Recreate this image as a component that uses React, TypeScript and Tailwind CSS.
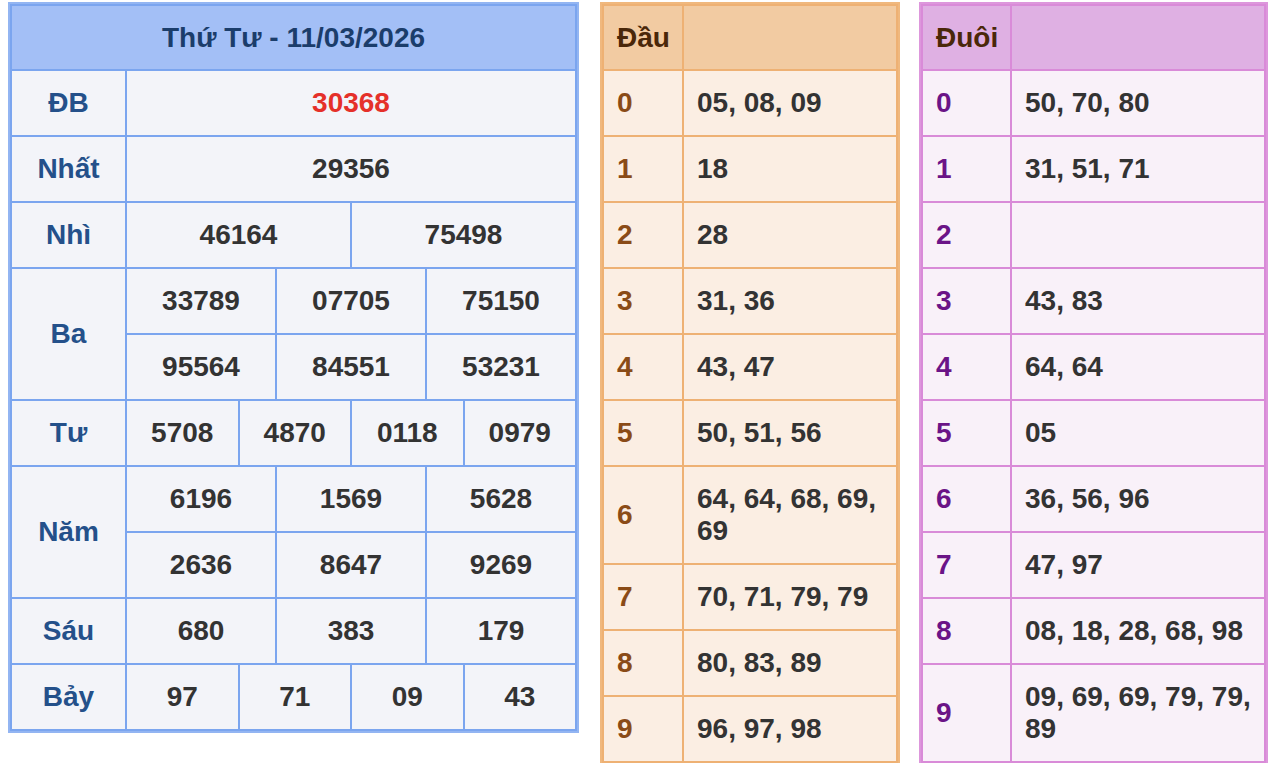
import React from 'react'

const font = { fontFamily: '"Liberation Sans", Arial, sans-serif' }

const blueCell = 'border-2 border-[#7ba5ef] bg-[#f3f4f9] py-4 leading-[32px] text-center text-[#333333]'
const blueLabel = 'border-2 border-[#7ba5ef] bg-[#f3f4f9] py-4 leading-[32px] text-center text-[#24508a]'

type Prize = { label: string; rows: string[][]; red?: boolean }

const prizes: Prize[] = [
    { label: 'ĐB', rows: [['30368']], red: true },
    { label: 'Nhất', rows: [['29356']] },
    { label: 'Nhì', rows: [['46164', '75498']] },
    { label: 'Ba', rows: [['33789', '07705', '75150'], ['95564', '84551', '53231']] },
    { label: 'Tư', rows: [['5708', '4870', '0118', '0979']] },
    { label: 'Năm', rows: [['6196', '1569', '5628'], ['2636', '8647', '9269']] },
    { label: 'Sáu', rows: [['680', '383', '179']] },
    { label: 'Bảy', rows: [['97', '71', '09', '43']] },
]

const dau = ['05, 08, 09', '18', '28', '31, 36', '43, 47', '50, 51, 56', '64, 64, 68, 69, 69', '70, 71, 79, 79', '80, 83, 89', '96, 97, 98']
const duoi = ['50, 70, 80', '31, 51, 71', '', '43, 83', '64, 64', '05', '36, 56, 96', '47, 97', '08, 18, 28, 68, 98', '09, 69, 69, 79, 79, 89']

function ResultTable() {
    return (
        <div className='w-[571px] shrink-0 border-2 border-[#93b5f2]'>
            <table className='w-full table-fixed border-collapse text-[28px] font-bold'>
                <colgroup>
                    <col className='w-[115px]' />
                    {Array.from({ length: 12 }).map((_, i) => <col key={i} />)}
                </colgroup>
                <tbody>
                    <tr>
                        <th colSpan={13} className='h-[65px] border-2 border-[#7ba5ef] bg-[#a3bff6] text-center text-[#1b3d6b]'>
                            Thứ Tư - 11/03/2026
                        </th>
                    </tr>
                    {prizes.map((p) =>
                        p.rows.map((row, ri) => (
                            <tr key={p.label + ri}>
                                {ri === 0 && (
                                    <td rowSpan={p.rows.length} className={blueLabel}>{p.label}</td>
                                )}
                                {row.map((n, i) => (
                                    <td key={i} colSpan={12 / row.length} className={p.red ? blueCell + ' !text-[#e5302a]' : blueCell}>
                                        {n}
                                    </td>
                                ))}
                            </tr>
                        ))
                    )}
                </tbody>
            </table>
        </div>
    )
}

type LotoProps = {
    title: string
    items: string[]
    width: string
    labelWidth: string
    outer: string
    border: string
    head: string
    cell: string
    digit: string
}

function LotoTable({ title, items, width, labelWidth, outer, border, head, cell, digit }: LotoProps) {
    return (
        <div className={`${width} shrink-0 self-start border-2 ${outer}`}>
            <table className='w-full table-fixed border-collapse text-[28px] font-bold'>
                <colgroup>
                    <col className={labelWidth} />
                    <col />
                </colgroup>
                <tbody>
                    <tr>
                        <th className={`h-[65px] border-2 ${border} ${head} px-[13px] text-left text-[#4a2709]`}>{title}</th>
                        <th className={`h-[65px] border-2 ${border} ${head}`}></th>
                    </tr>
                    {items.map((v, i) => (
                        <tr key={i}>
                            <td className={`border-2 ${border} ${cell} px-[13px] py-4 leading-[32px] ${digit}`}>{i}</td>
                            <td className={`border-2 ${border} ${cell} py-4 pl-[13px] pr-1 leading-[32px] text-[#333333]`}>{v}</td>
                        </tr>
                    ))}
                </tbody>
            </table>
        </div>
    )
}

export default function App() {
    return (
        <div className='flex h-[763px] items-start overflow-hidden bg-white pl-2 pt-[2px]' style={font}>
            <ResultTable />
            <div className='ml-[21px]'>
                <LotoTable
                    title='Đầu'
                    items={dau}
                    width='w-[300px]'
                    labelWidth='w-[80px]'
                    outer='border-[#f0b87e]'
                    border='border-[#eeb174]'
                    head='bg-[#f2cba2]'
                    cell='bg-[#fbeee3]'
                    digit='text-[#8a4b17]'
                />
            </div>
            <div className='ml-[19px]'>
                <LotoTable
                    title='Đuôi'
                    items={duoi}
                    width='w-[349px]'
                    labelWidth='w-[89px]'
                    outer='border-[#dd97dc]'
                    border='border-[#d98bd8]'
                    head='bg-[#dfb0e3]'
                    cell='bg-[#f9f1f9]'
                    digit='text-[#6b1487]'
                />
            </div>
        </div>
    )
}
